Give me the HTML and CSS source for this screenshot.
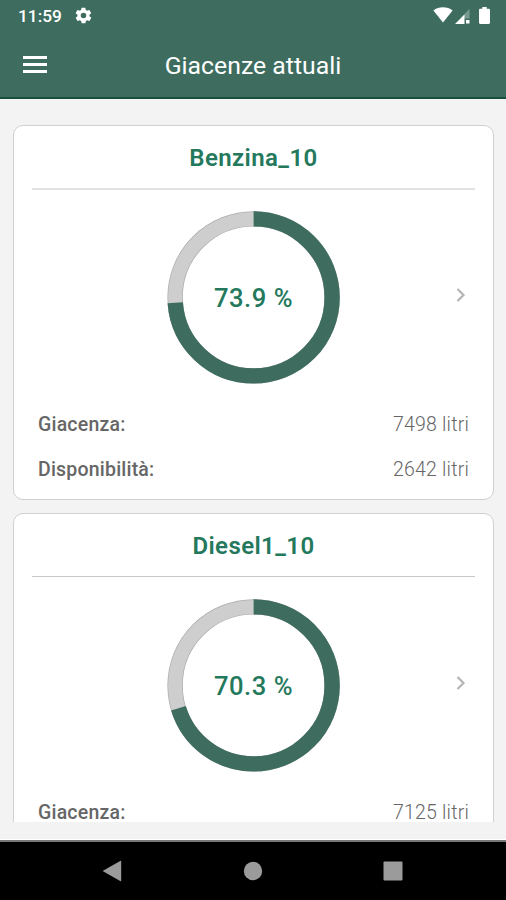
FILE: index.html
```html
<!DOCTYPE html>
<html lang="it">
<head>
  <meta charset="UTF-8" />
  <meta name="viewport" content="width=device-width, initial-scale=1.0" />
  <title>Giacenze attuali</title>
  <link rel="stylesheet" href="styles.css">
</head>
<body>
  <div class="app">
    <div class="statusBar">
      <span class="clock">11:59</span>
      <svg class="gear" width="19" height="19" viewBox="0 0 24 24">
        <path d="M19.4 13c0-.3.1-.6.1-1s0-.7-.1-1l2.100-1.600c.2-.2.200-.4.100-.6l-2-3.500c-.1-.2-.4-.3-.6-.2l-2.500 1c-.5-.4-1.100-.7-1.700-1l-.4-2.600c0-.2-.2-.4-.5-.4h-4c-.2 0-.5.2-.5.400l-.4 2.600c-.6.300-1.200.600-1.700 1l-2.500-1c-.2-.1-.5 0-.6.200l-2 3.500c-.1.200-.1.500.1.600L4.500 11c0 .3-.1.600-.1 1s0 .7.100 1l-2.100 1.600c-.2.200-.2.400-.1.600l2 3.500c.1.200.4.300.6.200l2.500-1c.5.400 1.100.700 1.700 1l.4 2.600c0 .2.300.4.500.4h4c.3 0 .5-.2.500-.4l.4-2.600c.6-.3 1.200-.6 1.700-1l2.500 1c.2.100.5 0 .6-.2l2-3.500c.1-.2.1-.4-.1-.6zM12 15.500a3.500 3.500 0 1 1 0-7 3.500 3.500 0 0 1 0 7z"/>
      </svg>
      <svg class="wifi" width="20" height="16" viewBox="0 0 20 16">
        <path d="M.4 3.400C5.600-.8 14.400-.8 19.600 3.400L10 15.600z"/>
      </svg>
      <svg class="signal" width="15" height="15" viewBox="0 0 15 15">
        <path d="M14.500 0v9.500H5z" opacity=".3"/>
        <path d="M0 15L9.500 5.500V15z"/>
        <path d="M11 11h3.500v3.500H11z"/>
      </svg>
      <svg class="battery" width="11" height="17" viewBox="0 0 11 17">
        <path d="M3.300 0h4.400v1.700h2.100c.6 0 1.200.5 1.200 1.100v13c0 .7-.6 1.200-1.200 1.200H1.200C.6 17 0 16.500 0 15.800v-13c0-.6.6-1.100 1.200-1.100h2.100z"/>
      </svg>
    </div>
    <div class="toolbar">
      <div class="menuBtn"><span></span><span></span><span></span></div>
      <h1>Giacenze attuali</h1>
    </div>

    <div class="list">
      <div class="card first">
        <h2>Benzina_10</h2>
        <div class="gauge">
          <svg width="174" height="174" viewBox="0 0 174 174">
            <circle class="edge" cx="86.6" cy="87.4" r="78.5"/>
            <circle class="track" cx="86.6" cy="87.4" r="78.5"/>
            <circle class="level" cx="86.6" cy="87.4" r="78.5" pathLength="100" stroke-dasharray="73.9 26.1"/>
          </svg>
          <span class="percent">73.9 %</span>
          <svg class="chevron" width="10" height="14" viewBox="0 0 10 14"><path d="M1.500 1l6 6-6 6"/></svg>
        </div>
        <div class="row"><span class="label">Giacenza:</span><span class="value">7498 litri</span></div>
        <div class="row"><span class="label">Disponibilità:</span><span class="value">2642 litri</span></div>
      </div>

      <div class="card">
        <h2>Diesel1_10</h2>
        <div class="gauge">
          <svg width="174" height="174" viewBox="0 0 174 174">
            <circle class="edge" cx="86.6" cy="87.4" r="78.5"/>
            <circle class="track" cx="86.6" cy="87.4" r="78.5"/>
            <circle class="level" cx="86.6" cy="87.4" r="78.5" pathLength="100" stroke-dasharray="70.3 29.7"/>
          </svg>
          <span class="percent">70.3 %</span>
          <svg class="chevron" width="10" height="14" viewBox="0 0 10 14"><path d="M1.500 1l6 6-6 6"/></svg>
        </div>
        <div class="row"><span class="label">Giacenza:</span><span class="value">7125 litri</span></div>
      </div>
    </div>

    <div class="navBar">
      <svg width="20" height="22" viewBox="0 0 20 22"><path d="M.6 11L18.200 1q1-.5 1 .5v19q0 1-1 .5z"/></svg>
      <svg width="20" height="20" viewBox="0 0 20 20"><circle cx="10" cy="10" r="9.200"/></svg>
      <svg width="20" height="20" viewBox="0 0 20 20"><rect x=".5" y=".5" width="19" height="19" rx="1"/></svg>
    </div>
  </div>
</body>
</html>
```
FILE: styles.css
```css
* {
  margin: 0;
  padding: 0;
  box-sizing: border-box;
}
body {
  font-family: Roboto, sans-serif;
  background: #f3f3f3;
  overflow: hidden;
}
svg {
  display: block;
  flex: none;
}
.app {
  height: 900px;
  display: flex;
  flex-direction: column;
}
.statusBar {
  height: 32px;
  padding: 0 17px 0 18px;
  display: flex;
  align-items: center;
  background: #3e6d60;
  color: #fff;
  fill: #fff;
}
.clock {
  font-size: 17.3px;
  font-weight: 500;
}
.gear {
  margin-left: 12px;
  margin-top: -1px;
}
.wifi {
  margin-left: auto;
  margin-top: -3px;
}
.signal {
  margin-left: 2px;
}
.battery {
  margin-left: 9px;
  margin-right: -1px;
  margin-top: -2px;
}
.toolbar {
  height: 67px;
  padding: 2px 23px 0;
  display: grid;
  grid-template-columns: 24px 1fr 24px;
  align-items: center;
  background: #3e6d60;
  border-bottom: 2px solid #17503f;
}
.menuBtn {
  margin-top: -3px;
  display: flex;
  flex-direction: column;
  gap: 4px;
}
.menuBtn span {
  height: 3px;
  background: #fff;
}
.toolbar h1 {
  font-size: 24.8px;
  font-weight: 400;
  color: #fff;
  text-align: center;
}
.list {
  height: 723px;
  padding: 26px 12px 0 13px;
  overflow: hidden;
}
.card {
  height: 375px;
  margin-bottom: 13px;
  padding: 0 18px;
  background: #fff;
  border: 1px solid #d0d0d0;
  border-radius: 10px;
}
.card h2 {
  height: 63px;
  line-height: 64px;
  font-size: 24px;
  font-weight: 600;
  letter-spacing: 0.4px;
  color: #24795d;
  text-align: center;
  border-bottom: 1px solid #c8c8c8;
}
.card.first h2 {
  height: 64px;
  margin-bottom: -1px;
  border-bottom: 2px solid #e2e2e2;
}
.gauge {
  height: 174px;
  margin: 21px 0 19px;
  display: grid;
  grid-template-columns: 1fr 174px 1fr;
  align-items: center;
}
.gauge > svg:first-child {
  grid-area: 1 / 2;
}
.gauge circle {
  fill: none;
  stroke-width: 14px;
}
.gauge .edge {
  stroke: #ababab;
  stroke-width: 15.4px;
}
.gauge .track {
  stroke: #cecece;
}
.gauge .level {
  stroke: #3e6d60;
  stroke-width: 15.4px;
  transform: rotate(-90deg);
  transform-origin: 86.6px 87.4px;
}
.percent {
  grid-area: 1 / 2;
  padding-top: 2px;
  text-align: center;
  font-size: 25.6px;
  font-weight: 500;
  letter-spacing: 0.5px;
  color: #24795d;
}
.chevron {
  grid-area: 1 / 3;
  justify-self: end;
  margin: -4px 9px 0 0;
  fill: none;
  stroke: #b5b5b5;
  stroke-width: 2.2;
}
.row {
  height: 44.5px;
  padding: 0 6px;
  display: flex;
  align-items: center;
  justify-content: space-between;
  font-size: 19.5px;
  line-height: 20px;
  letter-spacing: 0.2px;
  color: #666;
}
.label {
  font-weight: 500;
}
.value {
  font-weight: 300;
}
.navBar {
  height: 60px;
  margin-top: auto;
  padding: 0 103px 0 102px;
  display: flex;
  align-items: center;
  justify-content: space-between;
  background: #000;
  border-top: 2px solid #777;
  box-shadow: 0 -1px #fff;
  fill: #9b9b9b;
}
```
